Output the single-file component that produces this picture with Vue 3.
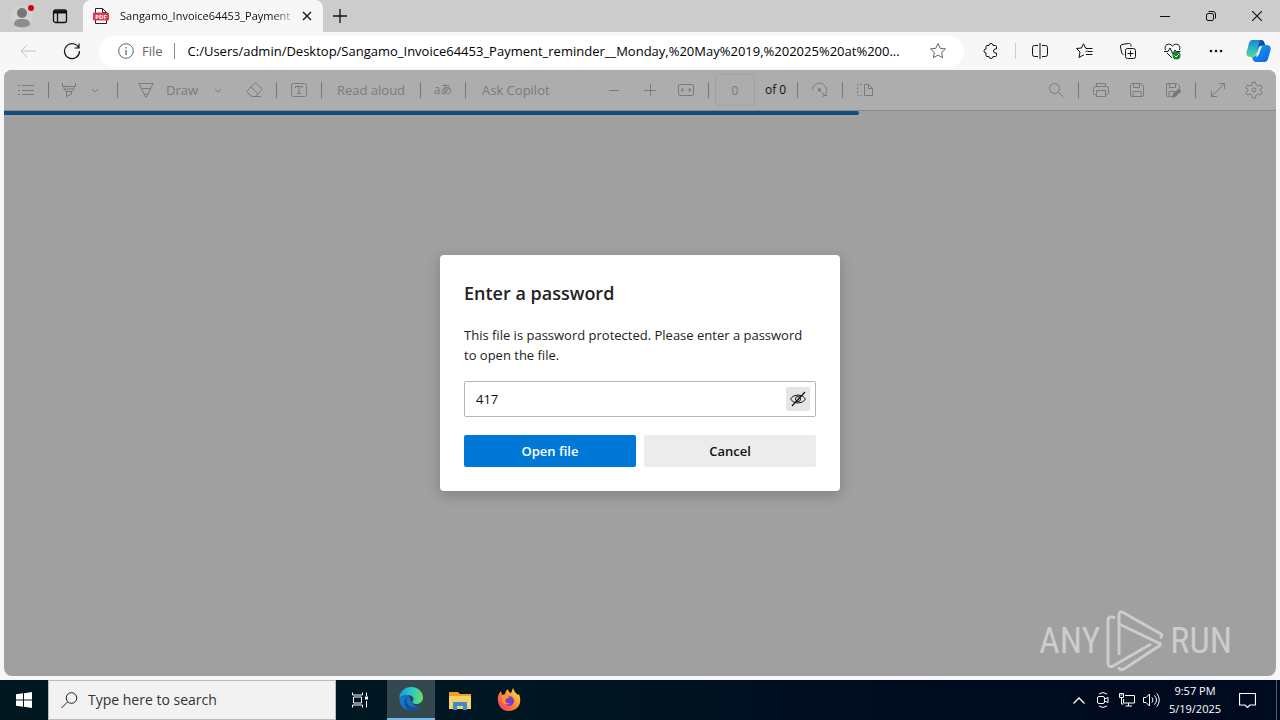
<script setup>
import { ref } from 'vue'

const address = ref('C:/Users/admin/Desktop/Sangamo_Invoice64453_Payment_reminder__Monday,%20May%2019,%202025%20at%200...')
const pageNumber = ref('0')
const password = ref('417')
const search = ref('')
const progress = ref(67.2)
</script>

<template>
  <div class="desktop">
    <header class="tabs">
      <button class="tool profile" aria-label="Profile">
        <svg class="solid" width="26" height="26" viewBox="0 0 26 26"><circle cx="13" cy="14" r="11" fill="#d2d2d2" /><circle cx="13" cy="10" r="5" fill="#777" /><path d="M5 22c0-5 3-6 8-6s8 1 8 6q-8 5-16 0z" fill="#8c8c8c" /><circle cx="22" cy="5" r="3" fill="#d8000c" /></svg>
      </button>
      <button class="tool workspace" aria-label="Tab actions">
        <svg width="16" height="16" viewBox="0 0 16 16"><rect x="1.500" y="2" width="13" height="12.500" rx="2" stroke-width="1.300" /><path d="M1.500 4h13" stroke-width="3" /><path d="M5.500 4v10.500" stroke-width="1.300" /></svg>
      </button>
      <div class="tab">
        <svg class="pdf" width="16" height="18" viewBox="0 0 16 18"><path d="M2.500 6V1.500h7l4 4V6M2.500 13v3.500h11V13M9.500 1.500v4h4" fill="#fff" stroke="#222" /><rect x="0" y="5.500" width="16" height="8" rx="1" fill="#e2384d" stroke="none" /><text x="8" y="12" text-anchor="middle" font-size="6" font-weight="700" fill="#fff" stroke="none">PDF</text></svg>
        <span class="tab-title">Sangamo_Invoice64453_Payment</span>
        <button class="tool close-tab" aria-label="Close tab"><svg width="10" height="10" viewBox="0 0 10 10"><path d="M1 1l8 8M9 1l-8 8" stroke-width="1.300" /></svg></button>
      </div>
      <button class="tool new-tab" aria-label="New tab"><svg width="14" height="14" viewBox="0 0 14 14"><path d="M7 0v14M0 7h14" stroke-width="1.300" /></svg></button>
      <div class="window-buttons">
        <button class="tool" aria-label="Minimize"><svg width="10" height="10" viewBox="0 0 10 10"><path d="M0 5.500h10" /></svg></button>
        <button class="tool" aria-label="Restore"><svg width="10" height="10" viewBox="0 0 10 10"><rect x=".5" y="2.500" width="7" height="7" rx="1.500" /><path d="M2.500.5H7a2.500 2.500 0 0 1 2.500 2.500v4.500" /></svg></button>
        <button class="tool" aria-label="Close"><svg width="10" height="10" viewBox="0 0 10 10"><path d="M0 0l10 10M10 0L0 10" stroke-width="1.200" /></svg></button>
      </div>
    </header>

    <nav class="address-row">
      <button class="tool back" aria-label="Back"><svg width="16" height="14" viewBox="0 0 16 14"><path d="M16 7H1M7 1L1 7l6 6" /></svg></button>
      <button class="tool" aria-label="Refresh"><svg width="18" height="18" viewBox="0 0 18 18"><path d="M15.800 6A7.500 7.500 0 1 0 16.500 9M16 1.500V6h-4.500" stroke-width="1.200" /></svg></button>
      <div class="address">
        <svg class="info" width="16" height="16" viewBox="0 0 16 16"><circle cx="8" cy="8" r="7.300" /><path d="M8 7v5M8 4v1.400" stroke-width="1.300" /></svg>
        <label class="scheme" for="url">File</label>
        <span class="bar"></span>
        <input id="url" v-model="address" class="url" type="text" />
        <button class="tool star" aria-label="Add to favorites"><svg width="18" height="18" viewBox="0 0 18 18"><path d="M9 1.500l2.200 4.800 5.300.6-3.900 3.600 1 5.200L9 13.100l-4.600 2.600 1-5.200L1.500 6.900l5.300-.6z" /></svg></button>
      </div>
      <div class="browser-tools">
        <button class="tool" aria-label="Extensions"><svg width="16" height="16" viewBox="0 0 16 16"><path d="M4 2.500h2a2 2 0 0 1 4 0h2.500q1 0 1 1V6h-1a2 2 0 0 0 0 4h1v2.500q0 1-1 1H10a2 2 0 0 1-4 0H4q-1 0-1-1V10a2 2 0 0 1 0-4V3.500q0-1 1-1z" /></svg></button>
        <span class="bar light"></span>
        <button class="tool" aria-label="Split screen"><svg width="16" height="16" viewBox="0 0 16 16"><path d="M8 0v16M6 2.500H2.500A2 2 0 0 0 .5 4.500v7a2 2 0 0 0 2 2H6M10 2.500h3.500a2 2 0 0 1 2 2v7a2 2 0 0 1-2 2H10" /></svg></button>
        <button class="tool" aria-label="Favorites"><svg width="17" height="16" viewBox="0 0 17 16"><path d="M10 5.500h6.500M11.500 8.500h5M10 11.500h6.500M11 5.500l-1.500-.5L7.500.8 5.500 5l-5 .5L4 9l-1 5.500 5-2.800M9.500 9L11 7.500" /></svg></button>
        <button class="tool" aria-label="Collections"><svg width="16" height="16" viewBox="0 0 16 16"><rect x="5.500" y="5.500" width="10" height="10" rx="2" /><path d="M10.500 7.500v6M7.500 10.500h6M3.500 11.500A2.500 2.500 0 0 1 1.500 9L.5 4a2 2 0 0 1 1.500-2.500L8.500.5a2 2 0 0 1 2.500 2v1" /></svg></button>
        <button class="tool" aria-label="Browser essentials"><svg width="17" height="17" viewBox="0 0 17 17"><path d="M1.500 7C-.5 2 5-1 8.500 3 12-1 17.500 2 15.500 7M0 8.500h4L6 5l3 6 2-4 1 1.500h4.500M3 10l5 5" /><circle cx="12.500" cy="12.500" r="4" fill="#16852b" stroke="none" /><path d="M10.500 12.500l1.500 1.500 3-3" stroke="#fff" /></svg></button>
        <button class="tool" aria-label="More"><svg class="solid" width="14" height="4" viewBox="0 0 14 4"><g fill="#111"><circle cx="2" cy="2" r="1.300" /><circle cx="7" cy="2" r="1.300" /><circle cx="12" cy="2" r="1.300" /></g></svg></button>
        <button class="tool copilot" aria-label="Copilot">
          <svg class="solid" width="25" height="24" viewBox="0 0 25 24">
            <defs><linearGradient id="cpa" x1="0" y1="0" x2="0" y2="1"><stop stop-color="#1685d5" /><stop offset=".5" stop-color="#28b8cc" /><stop offset="1" stop-color="#68d47e" /></linearGradient><linearGradient id="cpb" x1="0" y1="0" x2="1" y2="1"><stop stop-color="#0da8ed" /><stop offset="1" stop-color="#135ee5" /></linearGradient></defs>
            <path d="M6 1h9l-4.500 13q-1 4-5 4C-1 18 0 14 1.500 10L3 4q1-3 3-3z" fill="url(#cpa)" />
            <path d="M14 1h1q3 0 3.500 3l1 3h-4q-2 0-3 3l-2 4z" fill="#164b9f" />
            <path d="M19 23h-9q-3 0-4-5 4 0 5-4l2-6q1-2 3.500-2h3C26 6 25 10 24 13l-2 7q-1 3-3 3z" fill="url(#cpb)" />
            <path d="M13 8q1-1 3-1l-3 8q-1 3-3 3z" fill="#eafaff" />
          </svg>
        </button>
      </div>
    </nav>

    <main class="viewer">
      <div class="pdf-toolbar">
        <div class="group single"><button class="tool" aria-label="Contents"><svg width="18" height="12" viewBox="0 0 18 12"><path d="M5 1.500h12M5 6.500h12M5 10.500h12M1 1.500h2M1 6.500h2M1 10.500h2" /></svg></button></div>
        <div class="group highlight">
          <button class="tool wide" aria-label="Highlight"><svg width="16" height="16" viewBox="0 0 16 16"><path d="M1.500 1v3.500h13V1M3 4.500V7l2 2.500h6L13 7V4.500M5.500 9.500v5l5-2.500V9.500M4 7h8" /></svg></button>
          <button class="tool narrow" aria-label="Highlight options"><svg width="8" height="5" viewBox="0 0 8 5"><path d="M1 1l3 3 3-3" /></svg></button>
        </div>
        <div class="group draw">
          <button class="tool wide" aria-label="Pen"><svg width="16" height="16" viewBox="0 0 16 16"><path d="M.8 1.500h14.400L8.500 15h-1zM3.500 6.500h9M6.500 12h3" /></svg></button>
          <button class="tool word">Draw</button>
          <button class="tool narrow" aria-label="Draw options"><svg width="8" height="5" viewBox="0 0 8 5"><path d="M1 1l3 3 3-3" /></svg></button>
          <button class="tool wide end" aria-label="Erase"><svg width="18" height="16" viewBox="0 0 18 16"><path d="M1.500 8.500l7-7q1-1 2 0l5 5q1 1 0 2l-6 6H6l-4.500-4q-1-1 0-2zM5 5l7 7M9 14.500h6" /></svg></button>
        </div>
        <div class="group single"><button class="tool" aria-label="Add text"><svg width="16" height="14" viewBox="0 0 16 14"><path d="M2.500.5h11a2 2 0 0 1 2 2v9a2 2 0 0 1-2 2h-11a2 2 0 0 1-2-2v-9a2 2 0 0 1 2-2zM4.500 5V3.500h7V5M8 3.500v7M6 10.500h4" /></svg></button></div>
        <div class="group read"><button class="tool">Read aloud</button></div>
        <div class="group single"><button class="tool translate" aria-label="Translate">aあ</button></div>
        <div class="group ask">
          <button class="tool">Ask Copilot</button>
          <button class="tool step first" aria-label="Zoom out"><svg width="12" height="12" viewBox="0 0 12 12"><path d="M1 6.500h10" /></svg></button>
          <button class="tool step" aria-label="Zoom in"><svg width="12" height="12" viewBox="0 0 12 12"><path d="M0 6.500h12M6.500 0v12" /></svg></button>
          <button class="tool step" aria-label="Fit to width"><svg width="16" height="12" viewBox="0 0 16 12"><rect x=".5" y=".5" width="15" height="11" rx="1.500" /><path d="M3 6h3.500M9.500 6H13M5 4L3 6l2 2M11 4l2 2-2 2" /></svg></button>
        </div>
        <div class="group pages">
          <input id="page" v-model="pageNumber" class="page-input" type="text" />
          <label for="page">of 0</label>
        </div>
        <div class="group single"><button class="tool" aria-label="Rotate"><svg width="18" height="16" viewBox="0 0 18 16"><path d="M1.500 8a7 7 0 1 1 11.500 5.500M11 15.500l2-2-2-3.500M13 13.500h3.500" /><rect x="7.500" y="7" width="2" height="2" /></svg></button></div>
        <div class="group single last"><button class="tool" aria-label="Page view"><svg width="16" height="14" viewBox="0 0 16 14"><path d="M7.500 1.500V12.500h8V5.500l-4-4zM11.500 1.500v4h4" /><path d="M5 1.500H1.500q-1 0-1 1v9q0 1 1 1H5" stroke-dasharray="2 1.500" /></svg></button></div>
        <div class="group right">
          <button class="tool step" aria-label="Find"><svg width="16" height="16" viewBox="0 0 16 16"><circle cx="6.500" cy="6.500" r="5" /><path d="M10 10l5.500 5" /></svg></button>
          <span class="bar dim"></span>
          <button class="tool step" aria-label="Print"><svg width="16" height="16" viewBox="0 0 16 16"><path d="M3.500 4.500v-3h9v3M3.500 12.500h-2q-1 0-1-1V6.500q0-2 2-2h11q2 0 2 2v5q0 1-1 1h-2M3.500 8.500h9v6h-9z" /></svg></button>
          <button class="tool step" aria-label="Save"><svg width="16" height="16" viewBox="0 0 16 16"><path d="M2.500 1.500h9.500L14.500 4v9q0 1.500-1.500 1.500H3q-1.500 0-1.500-1.500V2.500zM4.500 1.500v4h6v-4M4 14.500v-5h8v5" /></svg></button>
          <button class="tool step" aria-label="Save as"><svg width="16" height="16" viewBox="0 0 16 16"><path d="M7 14.500H3q-1.500 0-1.500-1.500V1.500H12L14.500 4v3M4.500 1.500v4h6v-4M4 14.500v-5h6" /><path d="M7.500 15.500l1-4L14 7l2 2-5.500 5.500z" fill="#777" /></svg></button>
          <span class="bar dim"></span>
          <button class="tool step" aria-label="Full screen"><svg width="16" height="16" viewBox="0 0 16 16"><path d="M1.500 14.500l13-13M9 1.500h5.500V7M1.500 9v5.500H7" /></svg></button>
          <button class="tool step" aria-label="Settings"><svg width="18" height="18" viewBox="0 0 18 18"><path d="M7.500 1h3l.7 3 1.800 1 2.800-.9 1.500 2.700L15 8.500v1l2.300 1.700-1.500 2.700L13 13l-1.800 1-.7 3h-3l-.7-3L5 13l-2.800.9-1.500-2.700L3 9.500v-1L.7 6.800l1.500-2.700L5 5l1.800-1z" stroke-linejoin="round" /><circle cx="9" cy="9" r="2" /></svg></button>
        </div>
      </div>
      <div class="progress"><div class="progress-fill" :style="{ width: progress + '%' }"></div></div>

      <div class="watermark">
        <span>ANY</span>
        <svg width="58" height="62" viewBox="0 0 58 62"><path d="M9 8Q2 5 2 11v42q0 5 5 3l38-22M13 45V5q0-5 5-2l37 21q2 2-1 4M13 14l40 19q3 1 0 3L18 59q-5 2-5-2" fill="none" stroke="#ccc" stroke-width="3" /></svg>
        <span>RUN</span>
      </div>

      <div class="overlay">
        <form class="dialog" role="dialog" aria-labelledby="dialog-title" @submit.prevent>
          <h1 id="dialog-title">Enter a password</h1>
          <label for="password">This file is password protected. Please enter a password to open the file.</label>
          <div class="field">
            <input id="password" v-model="password" type="text" />
            <button class="tool reveal" type="button" aria-label="Hide password"><svg width="16" height="16" viewBox="0 0 16 16"><path d="M.5 8Q2.500 4 8 4t7.500 4Q13.500 12 8 12T.5 8z" /><circle cx="8" cy="8" r="2.500" /><path d="M2 15L15 1" stroke-width="1.200" /></svg></button>
          </div>
          <div class="actions">
            <button class="action primary" type="submit">Open file</button>
            <button class="action" type="button">Cancel</button>
          </div>
        </form>
      </div>
    </main>

    <footer class="taskbar">
      <button class="tool task" aria-label="Start"><svg class="solid" width="16" height="16" viewBox="0 0 16 16"><path d="M0 2.300L7 1.300V7.500H0zM8 1.200L16 0v7.500H8zM0 8.500h7v6.200l-7-1zM8 8.500h8V16l-8-1.200z" fill="#fff" /></svg></button>
      <div class="search">
        <label for="search" aria-label="Search"><svg width="17" height="17" viewBox="0 0 17 17"><circle cx="10.500" cy="6" r="5.300" /><path d="M6.500 10L.5 16" /></svg></label>
        <input id="search" v-model="search" type="text" placeholder="Type here to search" />
      </div>
      <button class="tool task view" aria-label="Task view"><svg width="17" height="16" viewBox="0 0 17 16"><path d="M.5.5V3h10V.5M.5 15.500V13h10v2.500M1.500 5h8v6h-8zM14.500.5V4M14.500 9v6.500" /><rect x="13.500" y="5" width="2" height="2" fill="#fff" /></svg></button>
      <button class="tool task active" aria-label="Microsoft Edge">
        <svg class="solid" width="24" height="24" viewBox="0 0 24 24">
          <defs><linearGradient id="ea" x1="0" y1="0" x2="1" y2="0"><stop stop-color="#159bdd" /><stop offset=".5" stop-color="#28c6d6" /><stop offset="1" stop-color="#72df57" /></linearGradient></defs>
          <path d="M1 10Q-1 18 6 22q9 5 16-3-4 2-8-1L9 8z" fill="#1376c7" />
          <path d="M0 11C1 4 6 0 12 0c7 0 12 5 12 10.500 0 4-3 6.500-6.500 6.500-3 0-5-1-3.500-3 2-3-1-6-5-6-4 0-7 1-9 3z" fill="url(#ea)" />
          <path d="M9 9c-3 4-1 10 5 11 4 1 7-1 8-2-2 4-6 6-10 6C5 23 3 13 9 9z" fill="#164e9d" />
        </svg>
      </button>
      <button class="tool task" aria-label="File Explorer"><svg class="solid" width="22" height="19" viewBox="0 0 22 19"><path d="M0 1h9l2 2h11v15H0z" fill="#e8a320" /><path d="M0 5h22v13H0z" fill="#f8d06a" /><path d="M4 19v-8h14v8h-4v-4H8v4z" fill="#3b8fc8" /></svg></button>
      <button class="tool task" aria-label="Firefox">
        <svg class="solid" width="24" height="24" viewBox="0 0 24 24">
          <defs><linearGradient id="fx" x1="1" y1="0" x2="0" y2="1"><stop stop-color="#fff04e" /><stop offset=".5" stop-color="#ff8828" /><stop offset="1" stop-color="#f02d73" /></linearGradient></defs>
          <path d="M1 13Q0 7 4 3l1 4 3-1q0-3 3-5 0 3 3 4l2-5q1 4 5 7l1-1q3 8-1 13c-6 7-19 5-20-6z" fill="url(#fx)" />
          <circle cx="12" cy="13" r="5" fill="#773dd4" /><path d="M5 8q4-2 8 1l-4 2q-2 5 4 4-5 4-8-2z" fill="#ff9130" />
        </svg>
      </button>
      <div class="tray">
        <button class="tool" aria-label="Show hidden icons"><svg width="12" height="7" viewBox="0 0 12 7"><path d="M.5 6.500L6 1l5.500 5.500" stroke-width="1.300" /></svg></button>
        <button class="tool" aria-label="Meet now"><svg width="12" height="16" viewBox="0 0 12 16"><rect x=".5" y="4.500" width="7" height="7" rx="1.500" /><path d="M7.500 7l3.500-1.500v5L7.500 9M2 2q4-3 8 0M2 14q4 3 8 0" /></svg></button>
        <button class="tool" aria-label="Network"><svg width="16" height="14" viewBox="0 0 16 14"><path d="M6 2.500h9.500v7.500H4.500V6M9.500 10v3M6.500 13h6.500M.5.500h4v4h-4zM2.500 4.500V11h2M1.500 2h2" /></svg></button>
        <button class="tool" aria-label="Volume"><svg width="17" height="14" viewBox="0 0 17 14"><path d="M.5 4.500H3L6.500 1v12L3 9.500H.5zM9 4.500q2 2.500 0 5M11.500 2.500q4 4.500 0 9M14 .5q4.500 6.500 0 13" /></svg></button>
      </div>
      <time class="clock" datetime="2025-05-19T21:57"><span>9:57 PM</span><span>5/19/2025</span></time>
      <button class="tool task" aria-label="Notifications"><svg width="17" height="17" viewBox="0 0 17 17"><path d="M.5 1.500h16v11.500H11L8.500 15.500 6 13H.5z" stroke-width="1.200" /></svg></button>
      <span class="show-desktop"></span>
    </footer>
  </div>
</template>

<style>
body { margin: 0; }
</style>

<style scoped>
.desktop { display: flex; flex-direction: column; height: 100vh; overflow: hidden; background: #f7f7f7; color: #111; font: 13px/20px "Open Sans", "Noto Sans CJK JP", sans-serif; }
.desktop * { box-sizing: border-box; }
button, input { font: inherit; color: inherit; }
input { min-width: 0; padding: 0; border: 0; outline: 0; background: transparent; }
svg { flex: none; fill: none; stroke: currentColor; }
.solid { stroke: none; }
.tool { display: flex; flex: none; align-items: center; justify-content: center; height: 32px; padding: 0; border: 0; background: transparent; white-space: nowrap; }

.tabs { display: flex; flex: none; align-items: center; height: 32px; background: #ccc; }
.profile { width: 44px; }
.workspace { width: 32px; }
.tab { display: flex; align-items: center; width: 240px; height: 32px; margin-left: 7px; padding: 0 8px 0 10px; border-radius: 8px 8px 0 0; background: #f7f7f7; }
.tab-title { flex: 1; min-width: 0; margin-left: 11px; white-space: nowrap; font-size: 11px; mask-image: linear-gradient(90deg, #000 88%, #0003); }
.close-tab { width: 16px; margin-left: 6px; }
.new-tab { width: 34px; }
.window-buttons { display: flex; margin-left: auto; }
.window-buttons .tool { width: 46px; }

.address-row { display: flex; flex: none; align-items: center; height: 38px; padding-left: 6px; }
.address-row > .tool { width: 44px; }
.back { color: #c4c4c4; }
.address { display: flex; flex: 1; align-items: center; min-width: 0; height: 31px; margin-left: 5px; padding: 0 10px 0 19px; border-radius: 16px; background: #fff; }
.info, .scheme, .star { color: #666; }
.scheme { margin-left: 8px; }
.bar { flex: none; width: 1px; height: 16px; background: #888; }
.address .bar { margin: 0 13px 0 11px; }
.url { flex: 1; height: 28px; color: #000; }
.star { width: 32px; }
.browser-tools { display: flex; flex: none; align-items: center; padding: 0 2px 0 5px; }
.browser-tools .tool { width: 44px; }
.browser-tools .copilot { width: 40px; }
.browser-tools .light { margin: 0 2px; background: #ccc; }

.viewer { position: relative; display: flex; flex: 1; flex-direction: column; min-height: 0; margin: 0 4px 4px; overflow: hidden; border-radius: 8px; background: #a0a0a0; }
.pdf-toolbar { display: flex; flex: none; align-items: center; height: 41px; border-bottom: 1px solid #8b8b8b; background: #adadad; color: #7b7b7b; }
.group { display: flex; flex: none; align-items: center; }
.group::after { content: ""; width: 1px; height: 16px; margin-left: auto; background: #777; }
.last::after, .right::after { display: none; }
.single { width: 45px; }
.single .tool { width: 44px; }
.highlight { width: 69px; }
.draw { width: 159px; padding-left: 8px; }
.wide { width: 40px; }
.narrow { width: 12px; }
.word { width: 46px; justify-content: flex-start; }
.end { margin-left: 11px; }
.read { width: 99px; }
.read .tool { width: 98px; }
.translate { font-size: 12px; }
.ask { width: 243px; padding-left: 16px; }
.step { width: 36px; }
.first { margin-left: auto; }
.ask::after { margin-left: 4px; }
.pages { width: 89px; padding-left: 6px; font-size: 12px; }
.page-input { width: 40px; height: 32px; border: 1px solid #a2a2a2; border-radius: 3px; text-align: center; }
.pages label { margin-left: 10px; color: #111; }
.right { margin-left: auto; padding-right: 4px; }
.dim { margin: 0 4px; background: #777; }
.progress { flex: none; height: 4px; }
.progress-fill { height: 4px; border-radius: 0 2px 2px 0; background: #104e82; }

.watermark { position: absolute; right: 44px; bottom: 4px; display: flex; align-items: center; gap: 6px; color: #ccc; font: 36px/62px "Liberation Sans Narrow", "Roboto Condensed", sans-serif; }
.overlay { position: absolute; inset: 0; display: flex; align-items: center; justify-content: center; }
.dialog { width: 400px; padding: 24px; border-radius: 4px; background: #fff; box-shadow: 0 4px 14px #0003; }
.dialog h1 { margin: 0 0 18px; font-size: 18px; line-height: 28px; font-weight: 600; color: #222; }
.dialog > label { display: block; color: #222; }
.field { display: flex; align-items: center; height: 36px; margin: 16px 0 18px; padding: 0 5px 0 11px; border: 1px solid #b5b5b5; border-radius: 2px; }
.field input { flex: 1; }
.reveal { width: 24px; height: 24px; border-radius: 2px; background: #e5e5e5; }
.actions { display: flex; gap: 8px; }
.action { flex: 1; height: 32px; padding: 0; border: 0; border-radius: 2px; background: #ececec; font-weight: 600; }
.primary { background: #0078d7; color: #fff; }

.taskbar { display: flex; flex: none; height: 40px; background: linear-gradient(90deg, #001720, #001622 40%, #000a1e 75%); color: #fff; }
.taskbar .tool { height: 40px; }
.task { width: 49px; }
.task:first-child { width: 48px; }
.search { display: flex; align-items: center; width: 288px; padding-left: 12px; border: 1px solid #bbb; background: #f2f2f2; color: #222; font-size: 14px; }
.search label { display: flex; }
.search input { flex: 1; margin-left: 10px; }
.search input::placeholder { color: #333; opacity: 1; }
.task.view { width: 51px; padding-right: 2px; }
.task.active { width: 48px; border-bottom: 2px solid #76b9ed; background: #344850; }
.tray { display: flex; margin-left: auto; }
.tray .tool { width: 24px; }
.clock { display: flex; flex-direction: column; justify-content: center; width: 60px; margin-left: 2px; text-align: center; font-size: 11px; line-height: 18px; }
.clock + .task { width: 44px; }
.show-desktop { width: 4px; margin-left: 7px; border-left: 1px solid #536070; }
</style>
